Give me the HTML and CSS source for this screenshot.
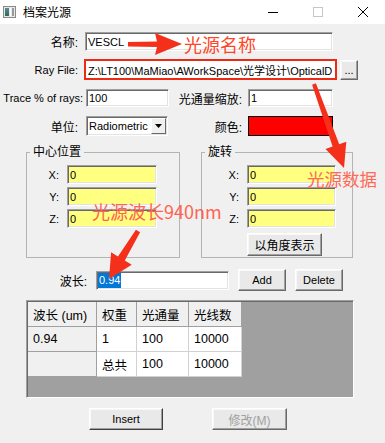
FILE: index.html
```html
<!DOCTYPE html>
<html>
<head>
  <meta charset="utf-8">
  <title>档案光源</title>
  <link rel="stylesheet" href="styles.css">
</head>
<body>
  <div class="window">
    <div class="titlebar">
      <svg class="app-icon" width="13" height="12" viewBox="0 0 13 12">
        <defs>
          <linearGradient id="ig" x1="0" y1="0" x2="0" y2="1">
            <stop offset="0" stop-color="#4f8fa8"/>
            <stop offset="1" stop-color="#2f6a4a"/>
          </linearGradient>
        </defs>
        <rect x="0.5" y="0.5" width="12" height="11" fill="#e8e8e8" stroke="#8a8a8a"/>
        <rect x="2" y="2" width="4" height="8" fill="url(#ig)"/>
        <rect x="7" y="2" width="1" height="8" fill="#ffffff"/>
        <rect x="9" y="2" width="2" height="8" fill="#9a9a9a"/>
      </svg>
      <span class="title">档案光源</span>
      <div class="controls">
        <div class="ctl">
          <svg width="10" height="10" viewBox="0 0 10 10"><line x1="0" y1="5.5" x2="10" y2="5.5" stroke="#000"/></svg>
        </div>
        <div class="ctl">
          <svg width="10" height="10" viewBox="0 0 10 10"><rect x="0.5" y="0.5" width="9" height="9" fill="none" stroke="#c6c6c6"/></svg>
        </div>
        <div class="ctl">
          <svg width="10" height="10" viewBox="0 0 10 10"><path d="M0 0L10 10M10 0L0 10" stroke="#000" stroke-width="1"/></svg>
        </div>
      </div>
    </div>

    <div class="client">
      <div class="row row-name">
        <span class="lbl zh">名称:</span>
        <div class="edit edit-name">VESCL</div>
      </div>

      <div class="row row-file">
        <span class="lbl">Ray File:</span>
        <div class="edit edit-file"><span class="path">Z:\LT100\MaMiao\AWorkSpace\光学设计\OpticalD</span></div>
        <div class="btn btn-dots">...</div>
      </div>

      <div class="row row-trace">
        <span class="lbl lbl-trace">Trace % of rays:</span>
        <div class="edit edit-short">100</div>
        <span class="lbl2 zh">光通量缩放:</span>
        <div class="edit edit-scale">1</div>
      </div>

      <div class="row row-unit">
        <span class="lbl zh">单位:</span>
        <div class="edit combo">
          <span class="combo-text">Radiometric</span>
          <span class="combo-btn">
            <svg width="7" height="4" viewBox="0 0 7 4"><path d="M0 0H7L3.5 4Z" fill="#000"/></svg>
          </span>
        </div>
        <span class="lbl2 lbl-color zh">颜色:</span>
        <div class="swatch"></div>
      </div>

      <div class="groups">
        <fieldset class="group group-pos">
          <legend class="zh">中心位置</legend>
          <div class="g-row"><span class="g-lbl">X:</span><div class="edit yellow">0</div></div>
          <div class="g-row"><span class="g-lbl">Y:</span><div class="edit yellow">0</div></div>
          <div class="g-row"><span class="g-lbl">Z:</span><div class="edit yellow">0</div></div>
        </fieldset>
        <fieldset class="group group-rot">
          <legend class="zh">旋转</legend>
          <div class="g-row"><span class="g-lbl">X:</span><div class="edit yellow">0</div></div>
          <div class="g-row"><span class="g-lbl">Y:</span><div class="edit yellow">0</div></div>
          <div class="g-row"><span class="g-lbl">Z:</span><div class="edit yellow">0</div></div>
          <div class="btn btn-angle zh">以角度表示</div>
        </fieldset>
      </div>

      <div class="row row-wave">
        <span class="lbl lbl-wave zh">波长:</span>
        <div class="edit edit-wave"><span class="sel">0.94</span></div>
        <div class="btn btn-small">Add</div>
        <div class="btn btn-small">Delete</div>
      </div>

      <div class="grid">
        <table>
          <tr>
            <th class="c1">波长 (um)</th>
            <th class="c2">权重</th>
            <th class="c3">光通量</th>
            <th class="c4">光线数</th>
          </tr>
          <tr>
            <th>0.94</th>
            <td>1</td>
            <td>100</td>
            <td>10000</td>
          </tr>
          <tr>
            <th></th>
            <td>总共</td>
            <td>100</td>
            <td>10000</td>
          </tr>
        </table>
      </div>

      <div class="row row-actions">
        <div class="btn btn-insert">Insert</div>
        <div class="btn btn-modify disabled zh">修改(M)</div>
      </div>
    </div>

    <!-- red callouts drawn on top of the screenshot -->
    <svg class="callouts" width="385" height="443" viewBox="0 0 385 443">
      <polygon fill="#f5301a" points="128,42 157,41.5 155,33 182,44 155,55 157,47 128,46.5"/>
      <polygon fill="#f5301a" points="315.9,83.3 339.2,144.2 346.3,141.7 344,168 325.5,149.1 332.6,146.6 312.1,84.7"/>
      <polygon fill="#f5301a" points="140.1,232.3 124.8,260.6 131.7,264.7 109,279 111.1,252.3 118,256.4 135.9,229.7"/>
    </svg>
    <div class="note note-name">光源名称</div>
    <div class="note note-data">光源数据</div>
    <div class="note note-wave">光源波长940nm</div>
  </div>
</body>
</html>
```

FILE: styles.css
```css
* {
  box-sizing: border-box;
}

html, body {
  margin: 0;
  background: #f0f0f0;
}

body {
  font-family: "Liberation Sans", "Noto Sans CJK SC", sans-serif;
  font-size: 11px;
  color: #000;
}

.window {
  position: relative;
  width: 385px;
  height: 443px;
  overflow: hidden;
  background: #f0f0f0;
}

.zh {
  font-size: 12px;
}

/* title bar */
.titlebar {
  height: 24px;
  background: #fff;
  display: flex;
  align-items: center;
}

.app-icon {
  margin-left: 3px;
}

.title {
  margin-left: 7px;
  font-family: "Noto Sans CJK SC", sans-serif;
  font-size: 12px;
  line-height: 16px;
}

.controls {
  margin-left: auto;
  display: flex;
}

.ctl {
  width: 45px;
  height: 24px;
  display: flex;
  align-items: center;
  justify-content: center;
}

/* form rows */
.client {
  padding-top: 8px;
}

.row {
  display: flex;
  align-items: center;
}

.lbl {
  width: 78px;
  margin-right: 7px;
  text-align: right;
  white-space: nowrap;
}

.lbl2 {
  white-space: nowrap;
  text-align: right;
}

.edit {
  height: 100%;
  background: #fff;
  border: 1px solid;
  border-color: #a0a0a0 #fff #fff #a0a0a0;
  box-shadow: inset 1px 1px #696969, inset -1px -1px #e3e3e3;
  padding: 0 2px 0 2px;
  display: flex;
  align-items: center;
  white-space: nowrap;
  overflow: hidden;
}

.row-name {
  height: 19px;
}

.edit-name {
  width: 248px;
}

.row-file {
  height: 21px;
  margin-top: 8px;
}

.row-file .lbl {
  margin-right: 6px;
}

.edit-file {
  width: 253px;
  flex-shrink: 0;
  border: 2px solid #ee2a12;
  box-shadow: none;
  padding-left: 2px;
}

.path {
  display: block;
  max-width: 247px;
  overflow: hidden;
}

.btn {
  display: flex;
  align-items: center;
  justify-content: center;
  background: #e9e9e9;
  border: 1px solid;
  border-color: #fff #696969 #696969 #fff;
  box-shadow: inset -1px -1px #a0a0a0, inset 1px 1px #f8f8f8;
  white-space: nowrap;
}

.btn-dots {
  width: 18px;
  height: 20px;
  margin-left: 3px;
}

.row-trace {
  height: 18px;
  margin-top: 9px;
}

.lbl-trace {
  width: 82px;
  margin-left: 1px;
  margin-right: 3px;
}

.edit-short {
  width: 83px;
}

.row-trace .lbl2 {
  width: 65px;
  margin-left: 8px;
  margin-right: 6px;
}

.edit-scale {
  width: 85px;
}

.row-unit {
  height: 20px;
  margin-top: 9px;
}

.row-unit .lbl {
  margin-right: 8px;
}

.combo {
  width: 82px;
  padding-right: 1px;
}

.combo-text {
  flex: 1;
}

.combo-btn {
  width: 15px;
  height: 16px;
  display: flex;
  align-items: center;
  justify-content: center;
  background: #f0f0f0;
  border: 1px solid;
  border-color: #fff #696969 #696969 #fff;
}

.lbl-color {
  width: 74px;
  margin-right: 6px;
}

.swatch {
  width: 85px;
  height: 100%;
  background: #ff0000;
  border: 1px solid #000;
}

/* group boxes */
.groups {
  display: flex;
  align-items: stretch;
  margin-top: 8px;
}

.group {
  margin: 0;
  min-width: 0;
  padding: 5px 0 1px 0;
  border: 1px solid #b4b4b4;
  display: flex;
  flex-direction: column;
}

.group legend {
  margin-left: 3px;
  padding: 0 3px;
  line-height: 16px;
}

.group-pos {
  margin-left: 26px;
  width: 154px;
}

.group-rot {
  margin-left: 21px;
  width: 152px;
}

.g-row {
  display: flex;
  align-items: center;
  height: 19px;
  margin-bottom: 3px;
}

.g-lbl {
  text-align: right;
  margin-right: 8px;
}

.group-pos .g-lbl {
  width: 32px;
}

.group-pos .edit {
  width: 90px;
}

.group-rot .g-lbl {
  width: 37px;
}

.group-rot .edit {
  width: 89px;
}

.yellow {
  background: #ffff80;
}

.btn-angle {
  width: 75px;
  height: 23px;
  margin-left: 45px;
  margin-top: 2px;
}

/* wavelength row */
.row-wave {
  height: 22px;
  margin-top: 11px;
}

.lbl-wave {
  width: 87px;
  margin-right: 9px;
}

.edit-wave {
  width: 133px;
  height: 19px;
  padding-left: 1px;
}

.sel {
  background: #0078d7;
  color: #fff;
  padding: 0 1px;
  line-height: 15px;
}

.btn-small {
  width: 48px;
  height: 22px;
  margin-left: 9px;
}

/* data grid */
.grid {
  margin-top: 9px;
  margin-left: 26px;
  width: 328px;
  height: 98px;
  background: #a0a0a0;
  border: 1px solid;
  border-color: #a0a0a0 #fff #fff #a0a0a0;
  box-shadow: inset 1px 1px #696969;
  padding: 1px 0 0 1px;
}

.grid table {
  border-collapse: separate;
  border-spacing: 0;
  table-layout: fixed;
  width: 214px;
  font-size: 12.5px;
}

.grid th,
.grid td {
  height: 25px;
  padding: 0 0 0 5px;
  text-align: left;
  font-weight: normal;
  white-space: nowrap;
  border-right: 1px solid #a0a0a0;
  border-bottom: 1px solid #a0a0a0;
}

.grid th {
  background: #f0f0f0;
}

.grid td {
  background: #fff;
  border-color: #d2d2d2;
}

.grid .c1 { width: 69px; }
.grid .c2 { width: 40px; }
.grid .c3 { width: 52px; }
.grid .c4 { width: 53px; }

/* bottom buttons */
.row-actions {
  height: 22px;
  margin-top: 10px;
}

.btn-insert {
  width: 74px;
  height: 22px;
  margin-left: 89px;
  border-color: #fff #404040 #404040 #fff;
}

.btn-modify {
  width: 75px;
  height: 22px;
  margin-left: 49px;
}

.disabled {
  color: #a0a0a0;
}

/* callouts */
.callouts {
  position: absolute;
  left: 0;
  top: 0;
  pointer-events: none;
}

.note {
  position: absolute;
  font-family: "Noto Sans CJK SC", sans-serif;
  font-size: 18px;
  line-height: 20px;
  white-space: nowrap;
  color: #ff4528;
}

.note-name {
  left: 184px;
  top: 34px;
}

.note-data {
  left: 307px;
  top: 169px;
  font-size: 17.5px;
  color: #ff6a55;
}

.note-wave {
  left: 92px;
  top: 201px;
  color: #ff6450;
}
```
